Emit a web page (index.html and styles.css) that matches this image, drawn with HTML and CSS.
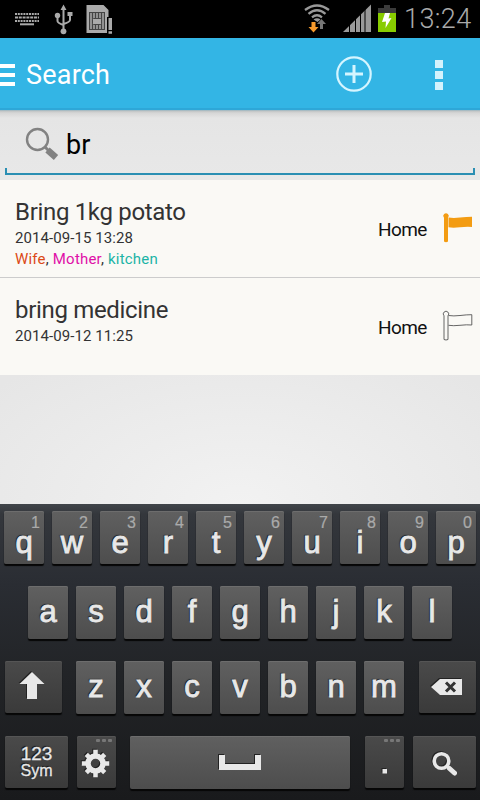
FILE: index.html
```html
<!DOCTYPE html>
<html lang="en">
<head>
    <meta charset="UTF-8">
    <meta name="viewport" content="width=device-width, initial-scale=1.0">
    <title>Search</title>
    <link rel="stylesheet" href="styles.css">
</head>
<body>
    <div class="status-bar">
        <svg class="status-left" width="120" height="38" viewBox="0 0 120 38">
            <!-- keyboard -->
            <g stroke="#aaa" stroke-width="2" fill="none">
                <path d="M15 14h24" stroke-dasharray="2 .8"/>
                <path d="M15 17.500h24" stroke-dasharray="3 .8"/>
                <path d="M15 21h24" stroke-dasharray="2 .8"/>
                <path d="M20 24.300h14"/>
            </g>
            <!-- usb -->
            <g stroke="#aaa" stroke-width="2" fill="none">
                <path d="M63.500 8v23M57.500 16v5q0 2 6 4M70 14v6q0 2-6.500 4"/>
            </g>
            <path d="M63.500 4.500l3 5.500h-6zM67.500 12h5v4h-5z" fill="#aaa"/>
            <circle cx="57.500" cy="15.500" r="2.700" fill="#aaa"/>
            <circle cx="63.500" cy="31.300" r="2.900" fill="#aaa"/>
            <!-- sim card -->
            <path d="M86.500 5h17l5 5v7h-1.500v16H86.500zM108.500 18h3.500v12h-3.500zM108.500 31.300h3.500v2.500h-3.500z" fill="#aaa"/>
            <path d="M89 12h16v18H89z" fill="#444"/>
            <path d="M91 13v16M94 13v16M97 13v16M100 13v16M103 13v16" stroke="#aaa" stroke-width="1.500"/>
            <rect x="92.500" y="18.500" width="9" height="6" rx="1" fill="#aaa" stroke="#444"/>
        </svg>
        <svg class="status-right" width="100" height="38" viewBox="300 0 100 38">
            <!-- wifi -->
            <g stroke="#999" stroke-width="2.300" fill="none">
                <path d="M305 10q12-9 24 0M308.500 13.800q8.500-7 17 0M312 17.300q5-4 10 0"/>
            </g>
            <path d="M313.500 19.500q3.500-2.500 7 0l-3 2.500z" fill="#999"/>
            <path d="M311.500 22h4v5h3l-5 5.500-5-5.500h3z" fill="#f79a2c"/>
            <path d="M321.500 19l4.500 5h-3v5h-3v-5h-3z" fill="#777"/>
            <!-- signal -->
            <path d="M343 32L371 4.500V32z" fill="#999"/>
            <path d="M349.500 4v28M355.500 4v28M360.500 4v28M365 4v28" stroke="#000" stroke-width="1"/>
            <!-- battery -->
            <path d="M384 5h6v3h6v6h-18V8h6z" fill="#3b3b3b"/>
            <path d="M378 13h18v19h-18z" fill="#8c0"/>
            <path d="M385 13h5l-1.500 5.500 3-.5-6 10 .5-6.500-4 .5z" fill="#fff"/>
        </svg>
        <span class="clock">13:24</span>
    </div>

    <div class="action-bar">
        <div class="menu-icon"><i></i><i></i><i></i></div>
        <h1>Search</h1>
        <svg class="add-icon" width="36" height="36" viewBox="0 0 36 36">
            <circle cx="18" cy="18" r="16.700"/>
            <path d="M18 9v18M9 18h18"/>
        </svg>
        <div class="more-icon"><i></i><i></i><i></i></div>
    </div>

    <div class="search-box">
        <svg class="search-icon" width="34" height="34" viewBox="0 0 34 34">
            <circle cx="12.500" cy="12.500" r="10.500" fill="none" stroke="#828282" stroke-width="2.400"/>
            <path d="M20 20l4 4" stroke="#828282" stroke-width="3"/>
            <path d="M22.500 23l8.500 7.500" stroke="#828282" stroke-width="6.500"/>
        </svg>
        <span class="query">br</span>
        <div class="underline"></div>
    </div>

    <div class="list">
        <div class="item">
            <div class="info">
                <div class="title">Bring 1kg potato</div>
                <div class="date">2014-09-15 13:28</div>
                <div class="tags"><span class="wife">Wife</span>, <span class="mother">Mother</span>, <span class="kitchen">kitchen</span></div>
            </div>
            <span class="place">Home</span>
            <svg class="flag flag-on" width="32" height="32" viewBox="0 0 32 32">
                <path d="M3 5.800a2.700 2.700 0 1 1 4 0V29.500q-2 1.500-4 0z"/>
                <path d="M7.500 5.500q5 .8 11.500 0t12-.8V15q-5-.5-12 .3t-11.500 0z"/>
            </svg>
        </div>
        <div class="item">
            <div class="info">
                <div class="title">bring medicine</div>
                <div class="date">2014-09-12 11:25</div>
            </div>
            <span class="place">Home</span>
            <svg class="flag flag-off" width="32" height="32" viewBox="0 0 32 32">
                <path d="M3 5.800a2.700 2.700 0 1 1 4 0V29.500q-2 1-4 0V5.800"/>
                <path d="M7.500 5.500q5 .8 11.500 0t11.800-.8V15q-5-.5-11.800.3t-11.500 0"/>
            </svg>
        </div>
    </div>

    <div class="empty"></div>

    <div class="keyboard">
        <div class="keys row-1">
            <div class="key"><sup>1</sup>q</div>
            <div class="key"><sup>2</sup>w</div>
            <div class="key"><sup>3</sup>e</div>
            <div class="key"><sup>4</sup>r</div>
            <div class="key"><sup>5</sup>t</div>
            <div class="key"><sup>6</sup>y</div>
            <div class="key"><sup>7</sup>u</div>
            <div class="key"><sup>8</sup>i</div>
            <div class="key"><sup>9</sup>o</div>
            <div class="key"><sup>0</sup>p</div>
        </div>
        <div class="keys row-2">
            <div class="key">a</div>
            <div class="key">s</div>
            <div class="key">d</div>
            <div class="key">f</div>
            <div class="key">g</div>
            <div class="key">h</div>
            <div class="key">j</div>
            <div class="key">k</div>
            <div class="key">l</div>
        </div>
        <div class="keys row-3">
            <div class="key dark shift">
                <svg width="57" height="52" viewBox="0 0 57 52">
                    <path d="M27 11l12.500 12H32v15H22V23h-7.500z"/>
                </svg>
            </div>
            <div class="key">z</div>
            <div class="key">x</div>
            <div class="key">c</div>
            <div class="key">v</div>
            <div class="key">b</div>
            <div class="key">n</div>
            <div class="key">m</div>
            <div class="key dark delete">
                <svg width="57" height="52" viewBox="0 0 57 52">
                    <path d="M12 26l9-8h22v16H21z"/>
                    <path class="cross" d="M27 21.500l9 9M36 21.500l-9 9"/>
                </svg>
            </div>
        </div>
        <div class="keys row-4">
            <div class="key dark sym"><span>123</span><small>Sym</small></div>
            <div class="key dark settings">
                <b class="dots"><i></i><i></i><i></i></b>
                <svg width="39" height="52" viewBox="0 0 39 52">
                    <circle class="ring" cx="18.500" cy="27.500" r="7.500"/>
                    <g class="teeth">
                        <path d="M18.500 13.800v5M18.500 36.200v5M4.800 27.500h5M27.200 27.500h5"/>
                        <path d="M9.300 18.300l3 3M24.700 33.700l3 3M9.300 36.700l3-3M24.700 21.300l3-3"/>
                    </g>
                </svg>
            </div>
            <div class="key space">
                <svg width="220" height="53" viewBox="0 0 220 53">
                    <path d="M89 19h6v9h30v-9h6v15H89z"/>
                </svg>
            </div>
            <div class="key dark period">
                <b class="dots"><i></i><i></i><i></i></b>
                <svg width="39" height="52" viewBox="0 0 39 52">
                    <path d="M17.500 33h4.500v4.500h-4.500z"/>
                </svg>
            </div>
            <div class="key dark find">
                <svg width="63" height="52" viewBox="0 0 63 52">
                    <circle class="lens" cx="28.500" cy="25" r="7.300"/>
                    <path class="handle" d="M36.500 32.500l5 4.500"/>
                    <path class="neck" d="M33 30l4 3"/>
                </svg>
            </div>
        </div>
    </div>
</body>
</html>
```
FILE: styles.css
```css
* {
    box-sizing: border-box;
}
body {
    margin: 0;
    width: 480px;
    height: 800px;
    overflow: hidden;
    display: flex;
    flex-direction: column;
    font-family: Roboto, sans-serif;
    background-color: #e8e8e8;
    color: #333;
}
svg {
    display: block;
    flex: none;
}

/* status bar */
.status-bar {
    display: flex;
    height: 38px;
    background-color: #000;
}
.status-right {
    margin-left: 180px;
}
.clock {
    margin-left: 4px;
    line-height: 38px;
    font-size: 27px;
    font-weight: 300;
    letter-spacing: 0.4px;
    color: #aaa;
    white-space: nowrap;
}

/* action bar */
.action-bar {
    display: flex;
    align-items: center;
    height: 72px;
    background-color: #33b5e5;
    border-bottom: 2px solid #2ea7d8;
}
.menu-icon {
    width: 15px;
    display: grid;
    gap: 5px;
    margin-top: 3px;
}
.menu-icon i {
    height: 4px;
    background-color: #fff;
}
h1 {
    width: 310px;
    margin: 4px 0 0 11px;
    font-size: 27px;
    font-weight: 400;
    line-height: 36px;
    letter-spacing: 0.2px;
    color: #fff;
}
.add-icon {
    margin-top: 2px;
    fill: none;
    stroke: #d5f5ff;
    stroke-width: 2.2;
}
.add-icon path {
    stroke-width: 3;
}
.more-icon {
    display: grid;
    gap: 3px;
    margin: 4px 0 0 63px;
}
.more-icon i {
    width: 8px;
    height: 8px;
    background-color: #d5f2fc;
}

/* search field */
.search-box {
    position: relative;
    display: flex;
    height: 70px;
    padding: 17px 0 0 25px;
    background: linear-gradient(#8fb3c1 0, #c0c3c4 1px, #d6d6d6 3px, #e5e5e5 8px, #e8e8e8 100%);
}
.query {
    margin-left: 7px;
    font-size: 27px;
    line-height: 36px;
    color: #000;
}
.underline {
    position: absolute;
    left: 5px;
    right: 5px;
    bottom: 5px;
    height: 7px;
    border: 2px solid #2b8fb3;
    border-top: 0;
}

/* results */
.item {
    display: flex;
    height: 97px;
    padding: 17px 7px 0 15px;
    background-color: #faf9f5;
}
.item + .item {
    height: 98px;
    border-top: 1px solid #ccc;
}
.info {
    width: 363px;
}
.title {
    font-size: 24px;
    line-height: 30px;
    letter-spacing: -0.32px;
}
.date {
    font-size: 15px;
    line-height: 22px;
    letter-spacing: 0.08px;
}
.tags {
    font-size: 15px;
    line-height: 20px;
    letter-spacing: 0.2px;
}
.wife {
    color: #dc4a16;
}
.mother {
    color: #e010a8;
}
.kitchen {
    color: #1cb4a6;
}
.place {
    width: 63px;
    padding-top: 21px;
    font-size: 19px;
    line-height: 24px;
    letter-spacing: -0.6px;
    color: #111;
}
.flag {
    margin-top: 15px;
}
.flag-on {
    fill: #f39c12;
}
.flag-off {
    fill: none;
    stroke: #555;
    stroke-width: 0.9;
}
.empty {
    height: 129px;
    background: radial-gradient(ellipse 320px 180px at 50% 100%, #f2f2f2, #e6e6e6);
}

/* keyboard */
.keyboard {
    height: 296px;
    padding-top: 7px;
    background: linear-gradient(#41454a 0, #34373c 10px, #2a2d33 80px, #222427 170px, #191a1c 100%);
    font-family: "Liberation Sans", Arial, sans-serif;
}
.keys {
    display: flex;
    gap: 8px;
    height: 75px;
    padding-left: 4px;
}
.row-2 {
    padding-left: 28px;
}
.row-3,
.row-4 {
    padding-left: 5px;
}
.key {
    position: relative;
    flex: none;
    width: 40px;
    height: 53px;
    border-radius: 2px;
    background: linear-gradient(#606060, #4d4d4d);
    box-shadow: 0 2px 1px #060606, inset 0 1px 0 #6d6d6d;
    text-align: center;
    font-size: 31px;
    line-height: 51px;
    color: #e8e8e8;
    -webkit-text-stroke: 0.9px #e8e8e8;
    text-shadow: -1px -1px 1px #111;
}
.row-1 .key {
    line-height: 64px;
}
.key sup {
    position: absolute;
    top: 3px;
    right: 4px;
    font-size: 16px;
    line-height: 18px;
    color: #aaa;
    -webkit-text-stroke: 0.2px #aaa;
    text-shadow: none;
}
.key svg {
    fill: #e8e8e8;
    filter: drop-shadow(-1px -1px 0 #222);
}
.dark {
    height: 52px;
    background: linear-gradient(#4a4a4a, #3a3a3a);
    box-shadow: 0 2px 1px #060606, inset 0 1px 0 #555;
}
.shift {
    width: 57px;
    margin-right: 6px;
}
.delete {
    width: 57px;
    margin-left: 7px;
}
.delete .cross {
    stroke: #333;
    stroke-width: 3;
}
.sym {
    width: 63px;
    display: flex;
    flex-direction: column;
    align-items: center;
}
.sym span {
    margin-top: 7px;
    font-size: 19px;
    line-height: 21px;
    -webkit-text-stroke: 0.3px #e8e8e8;
}
.sym small {
    margin-top: -2px;
    font-size: 16px;
    line-height: 18px;
    -webkit-text-stroke: 0.3px #e8e8e8;
}
.settings {
    width: 39px;
    margin-left: 1px;
}
.settings .ring {
    fill: none;
    stroke: #e8e8e8;
    stroke-width: 5.5;
}
.settings .teeth {
    stroke: #e8e8e8;
    stroke-width: 4.5;
}
.dots {
    position: absolute;
    top: 3px;
    right: 4px;
    display: flex;
    gap: 2px;
}
.dots i {
    width: 4px;
    height: 3px;
    border-radius: 1px;
    background-color: #777;
}
.space {
    width: 220px;
    margin-left: 6px;
}
.period {
    width: 39px;
    margin-left: 7px;
}
.find {
    width: 63px;
    margin-left: 1px;
}
.find .lens {
    fill: none;
    stroke: #e8e8e8;
    stroke-width: 3.6;
}
.find .handle {
    stroke: #e8e8e8;
    stroke-width: 5;
    stroke-linecap: round;
}
.find .neck {
    stroke: #e8e8e8;
    stroke-width: 3;
}
```
